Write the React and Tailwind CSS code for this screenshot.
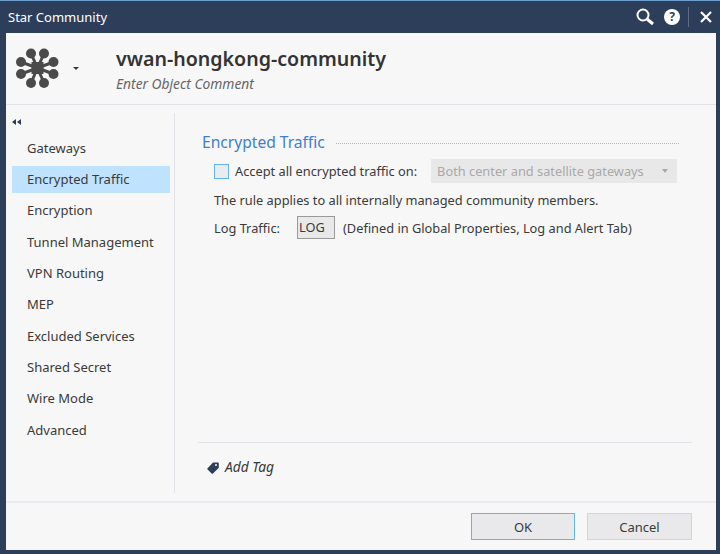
import React from "react";

const font = { fontFamily: '"Noto Sans", sans-serif' };

const navItems = [
    "Gateways",
    "Encrypted Traffic",
    "Encryption",
    "Tunnel Management",
    "VPN Routing",
    "MEP",
    "Excluded Services",
    "Shared Secret",
    "Wire Mode",
    "Advanced",
];

const StarLogo = () => (
    <svg width="44" height="44" viewBox="0 0 44 44" fill="#4a4a4a">
        <g stroke="#4a4a4a" strokeWidth="3">
            <line x1="21.5" y1="21" x2="15" y2="6.5" />
            <line x1="21.5" y1="21" x2="28" y2="6.5" />
            <line x1="21.5" y1="21" x2="5" y2="15" />
            <line x1="21.5" y1="21" x2="37.5" y2="15" />
            <line x1="21.5" y1="21" x2="5" y2="27" />
            <line x1="21.5" y1="21" x2="37.5" y2="27" />
            <line x1="21.5" y1="21" x2="15" y2="36" />
            <line x1="21.5" y1="21" x2="28" y2="36" />
        </g>
        <rect x="15.5" y="15" width="12" height="12" />
        <circle cx="15" cy="6.5" r="5" />
        <circle cx="28" cy="6.5" r="5" />
        <circle cx="5" cy="15" r="5" />
        <circle cx="37.5" cy="15" r="5" />
        <circle cx="5" cy="27" r="5" />
        <circle cx="37.5" cy="27" r="5" />
        <circle cx="15" cy="36" r="5" />
        <circle cx="28" cy="36" r="5" />
    </svg>
);

const App = () => {
    return (
        <div
            style={font}
            className="w-[720px] h-[554px] flex flex-col overflow-hidden bg-[#2c3e5a] border-t border-t-[#6d9fd0] pb-[4px] text-[13px] text-[#3a3a3a]"
        >
            {/* Title bar */}
            <div className="h-[32px] shrink-0 flex items-center pl-[8px] text-white text-[13px]">
                <span className="pt-[2px]">Star Community</span>
                <div className="ml-auto flex items-center h-full">
                    <svg width="20" height="20" viewBox="0 0 20 20" fill="none" stroke="white" className="mr-[9px]">
                        <circle cx="8" cy="8" r="5.5" strokeWidth="2" />
                        <line x1="12" y1="12" x2="18" y2="17" strokeWidth="3" />
                    </svg>
                    <div className="w-[16px] h-[16px] rounded-full bg-white flex items-center justify-center text-[#2c3e5a] text-[12px] font-bold mr-[8px]">
                        ?
                    </div>
                    <div className="w-px h-[20px] bg-[#5c6b80] mr-[11px]" />
                    <svg width="12" height="12" viewBox="0 0 12 12" stroke="white" strokeWidth="2.2" className="mr-[8px]">
                        <line x1="1" y1="1" x2="11" y2="11" />
                        <line x1="11" y1="1" x2="1" y2="11" />
                    </svg>
                </div>
            </div>

            {/* Dialog body */}
            <div className="flex-1 ml-[6px] mr-[4px] bg-[#f7f7f7] flex flex-col min-h-0">
                {/* Header */}
                <div className="h-[72px] shrink-0 flex items-center border-b border-[#dfe3e8]">
                    <div className="ml-[10px]">
                        <StarLogo />
                    </div>
                    <div className="ml-[13px] w-0 h-0 border-x-[3px] border-x-transparent border-t-[3px] border-t-[#3a3a3a]" />
                    <div className="ml-[37px] pt-[2px] flex flex-col">
                        <span className="text-[19.6px] leading-[28px] font-semibold text-[#333]">vwan-hongkong-community</span>
                        <span className="text-[13.8px] leading-[22px] italic text-[#666]">Enter Object Comment</span>
                    </div>
                </div>

                {/* Main */}
                <div className="flex-1 flex min-h-0">
                    <div className="w-[169px] shrink-0 border-r border-[#dfe3e8] mt-[8px] mb-[8px] flex flex-col">
                        <div className="h-[18px] pl-[6px] flex items-center">
                            <svg width="9" height="6" viewBox="0 0 9 6" fill="#2c3e5a">
                                <path d="M4 0v6L0 3zM9 0v6L5 3z" />
                            </svg>
                        </div>
                        <div className="pl-[6px] pr-[4px] mt-[4px] flex flex-col gap-[4.33px]">
                            {navItems.map((item) => (
                                <div
                                    key={item}
                                    className={`h-[27px] pl-[15px] flex items-center ${
                                        item === "Encrypted Traffic" ? "bg-[#bfe3ff]" : ""
                                    }`}
                                >
                                    {item}
                                </div>
                            ))}
                        </div>
                    </div>

                    <div className="flex-1 flex flex-col min-w-0 pl-[23px] pr-[24px] mb-[9px] text-[12.8px]">
                        <div className="mt-[26px] ml-[4px] flex items-center pr-[13px]">
                            <span className="text-[15.6px] leading-[22px] text-[#3f7fce]">Encrypted Traffic</span>
                            <div className="flex-1 ml-[11px] mt-[2px] border-t border-dotted border-[#a8b4c0]" />
                        </div>
                        <div className="mt-[6px] ml-[16px] flex items-center h-[24px]">
                            <div className="w-[15px] h-[15px] shrink-0 border border-[#62b3ee] bg-[#e9ebee]" />
                            <span className="ml-[6px] pt-[2px]">Accept all encrypted traffic on:</span>
                            <div className="ml-[14px] w-[246px] h-[24px] bg-[#e8e8e8] text-[#a9a9a9] flex items-center pl-[6px] pr-[9px]">
                                <span className="pt-[2px]">Both center and satellite gateways</span>
                                <div className="ml-auto w-0 h-0 border-x-[3px] border-x-transparent border-t-[4px] border-t-[#a9a9a9]" />
                            </div>
                        </div>
                        <div className="mt-[7px] ml-[16px] h-[22px] flex items-center">
                            The rule applies to all internally managed community members.
                        </div>
                        <div className="mt-[4px] ml-[16px] h-[23px] flex items-center">
                            <span className="w-[83px] pt-[2px]">Log Traffic:</span>
                            <div className="w-[38px] h-[23px] border border-[#9a9a9a] bg-[#e9e9e9] flex items-center pl-[1px] pt-[1px]">
                                LOG
                            </div>
                            <span className="ml-[8px] pt-[2px]">(Defined in Global Properties, Log and Alert Tab)</span>
                        </div>

                        <div className="mt-auto h-[50px] border-t border-[#dfe3e8] flex items-center pl-[9px]">
                            <svg width="12" height="12" viewBox="0 0 12 12" fill="#2c3e5a">
                                <path d="M6 0.5h5a.8.8 0 0 1 .8.8v4.4L6 11.5a1 1 0 0 1-1.4 0L.6 7.6a1 1 0 0 1 0-1.4zM9 2a1 1 0 1 0 0 2 1 1 0 0 0 0-2z" fillRule="evenodd" />
                            </svg>
                            <span className="ml-[6px] italic text-[13.8px]">Add Tag</span>
                        </div>
                    </div>
                </div>

                {/* Footer */}
                <div className="h-[49px] shrink-0 border-t-2 border-[#e8ecf0] flex items-center justify-end gap-[12px] pr-[24px]">
                    <button className="w-[104px] h-[27px] pt-[2px] bg-[#e9e9eb] border border-[#62b3ee] text-[#3a3a3a]">OK</button>
                    <button className="w-[105px] h-[27px] pt-[2px] bg-[#e9e9eb] border border-[#d5d5d8] text-[#3a3a3a]">Cancel</button>
                </div>
            </div>
        </div>
    );
};

export default App;
